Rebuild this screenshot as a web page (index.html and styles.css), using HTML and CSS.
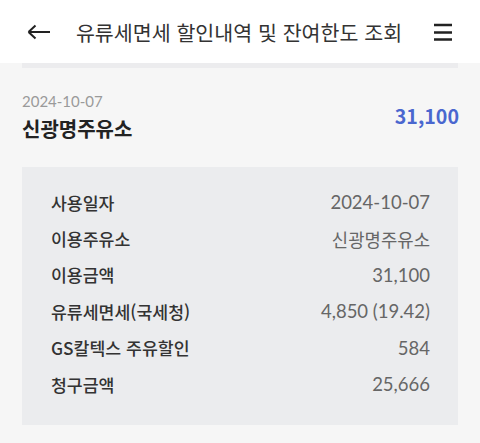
FILE: index.html
```html
<!DOCTYPE html>
<html lang="ko">
<head>
<meta charset="utf-8">
<link rel="stylesheet" href="styles.css">
</head>
<body>
<header class="topbar">
  <svg class="back" width="24" height="16" viewBox="0 0 24 16"><path d="M1.5 8H23M1.5 8L8.5 1.5M1.5 8L8.5 14.5" fill="none" stroke="#222" stroke-width="2"/></svg>
  <h1 class="title">유류세면세 할인내역 및 잔여한도 조회</h1>
  <svg class="menu" width="20" height="18" viewBox="0 0 20 18"><path d="M1 2H19M1 9.5H19M1 16.5H19" stroke="#222" stroke-width="2.6"/></svg>
</header>
<main class="page">
  <div class="strip"></div>
  <section class="item">
    <div class="item-info">
      <div class="item-date">2024-10-07</div>
      <div class="item-name">신광명주유소</div>
    </div>
    <div class="item-amount">31,100</div>
  </section>
  <section class="detail">
    <div class="row"><span class="label">사용일자</span><span class="value">2024-10-07</span></div>
    <div class="row"><span class="label">이용주유소</span><span class="value value-ko">신광명주유소</span></div>
    <div class="row"><span class="label">이용금액</span><span class="value">31,100</span></div>
    <div class="row"><span class="label">유류세면세(국세청)</span><span class="value">4,850 (19.42)</span></div>
    <div class="row"><span class="label">GS칼텍스 주유할인</span><span class="value">584</span></div>
    <div class="row"><span class="label">청구금액</span><span class="value">25,666</span></div>
  </section>
</main>
</body>
</html>
```
FILE: styles.css
```css
html, body {
  margin: 0;
  padding: 0;
}
body {
  background: #f6f6f6;
  font-family: "Noto Sans CJK KR", "Noto Sans", sans-serif;
  width: 480px;
  height: 443px;
  overflow: hidden;
}
.topbar {
  height: 63px;
  background: #fff;
  display: flex;
  align-items: center;
  padding: 0 27px 0 27px;
  box-sizing: border-box;
}
.back {
  display: block;
  flex: none;
}
.title {
  flex: 1;
  margin: 0;
  text-align: center;
  font-size: 20.6px;
  font-weight: 400;
  color: #333;
  padding-right: 6px;
  white-space: nowrap;
}
.menu {
  display: block;
  flex: none;
}
.page {
  padding: 0 22px;
}
.strip {
  height: 5px;
  background: #ececee;
}
.item {
  display: flex;
  align-items: center;
  justify-content: space-between;
  padding: 23px 0 20px;
}
.item-date {
  font-family: Lato, "Noto Sans CJK KR", sans-serif;
  font-size: 15px;
  color: #9a9a9a;
  line-height: 20px;
}
.item-name {
  font-size: 20px;
  font-weight: 700;
  color: #222;
  line-height: 36px;
}
.item-amount {
  font-size: 19.6px;
  font-weight: 700;
  color: #4a67cf;
  margin-top: -8px;
  margin-right: -1px;
}
.detail {
  background: #ebecee;
  padding: 17px 28px 23px 29px;
  display: flex;
  flex-direction: column;
}
.row {
  display: flex;
  justify-content: space-between;
  align-items: center;
  height: 36.4px;
}
.label {
  font-size: 17.25px;
  font-weight: 500;
  color: #333;
}
.value {
  font-family: Lato, "Noto Sans CJK KR", sans-serif;
  font-size: 18.5px;
  color: #666;
}
.value-ko {
  font-size: 17.8px;
}
```
